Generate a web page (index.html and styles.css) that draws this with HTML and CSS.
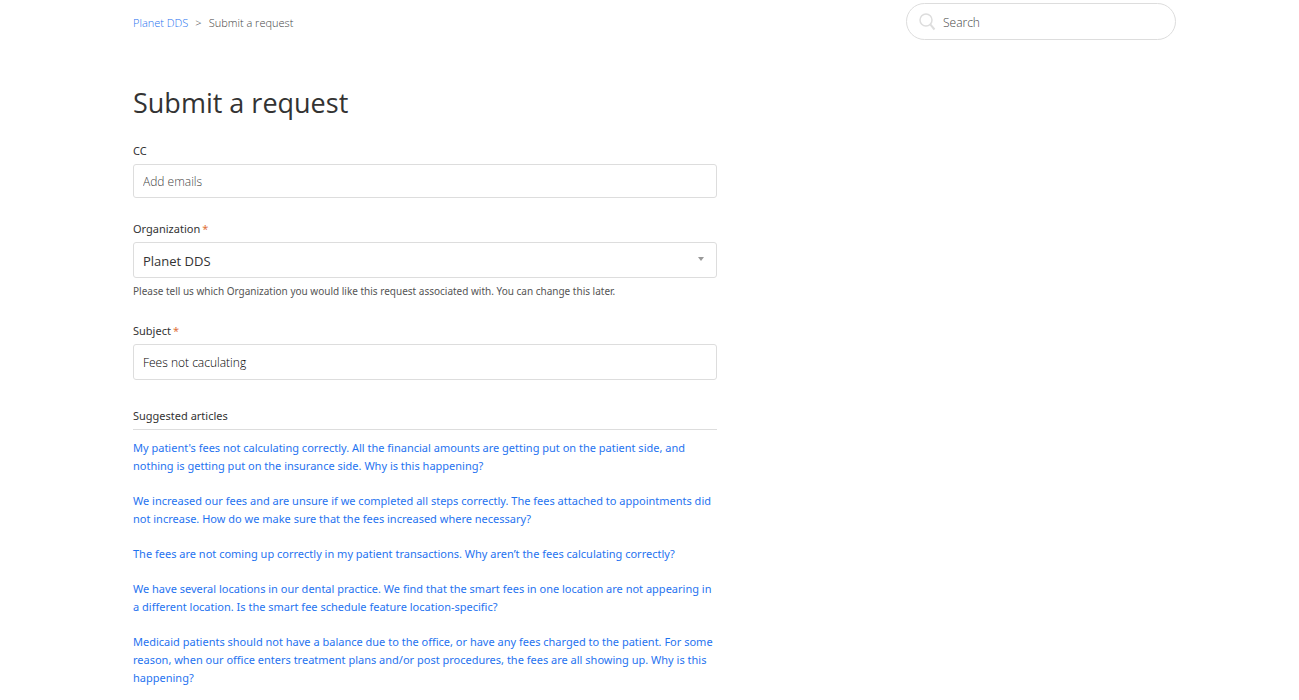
FILE: index.html
```html
<!DOCTYPE html>
<html lang="en">

<head>
    <meta charset="UTF-8">
    <title>Submit a request</title>
    <link rel="stylesheet" href="styles.css">
</head>

<body>
    <div class="container">
        <nav class="sub-nav">
            <ol class="breadcrumbs">
                <li><a href="#">Planet DDS</a></li>
                <li>Submit a request</li>
            </ol>
            <form class="search" role="search">
                <svg class="search-icon" viewBox="0 0 18 18" width="18" height="18" aria-hidden="true">
                    <circle cx="7" cy="7" r="6" fill="none" stroke="#ddd" stroke-width="1.5" />
                    <path d="M11.3 11.3L15.5 16.5" stroke="#ddd" stroke-width="2" />
                </svg>
                <input type="search" placeholder="Search" aria-label="Search">
            </form>
        </nav>

        <main class="form">
            <h1>Submit a request</h1>
            <form class="request-form">
                <div class="form-field cc">
                    <label for="cc">CC</label>
                    <input type="text" id="cc" placeholder="Add emails">
                </div>
                <div class="form-field organization">
                    <label for="organization">Organization<span class="required">*</span></label>
                    <div class="select-box">
                        <select id="organization">
                            <option>Planet DDS</option>
                        </select>
                        <svg class="arrow" viewBox="0 0 6 4" width="6" height="4" aria-hidden="true">
                            <path d="M0 0H6L3 4Z" fill="#999" />
                        </svg>
                    </div>
                    <p class="hint">Please tell us which Organization you would like this request associated with. You can change this later.</p>
                </div>
                <div class="form-field subject">
                    <label for="subject">Subject<span class="required">*</span></label>
                    <input type="text" id="subject" value="Fees not caculating">
                </div>
            </form>

            <section class="suggestions">
                <h2>Suggested articles</h2>
                <ul>
                    <li><a href="#">My patient's fees not calculating correctly. All the financial amounts are getting put on the patient side, and nothing is getting put on the insurance side. Why is this happening?</a></li>
                    <li><a href="#">We increased our fees and are unsure if we completed all steps correctly. The fees attached to appointments did not increase. How do we make sure that the fees increased where necessary?</a></li>
                    <li><a href="#">The fees are not coming up correctly in my patient transactions. Why aren’t the fees calculating correctly?</a></li>
                    <li><a href="#">We have several locations in our dental practice. We find that the smart fees in one location are not appearing in a different location. Is the smart fee schedule feature location-specific?</a></li>
                    <li><a href="#">Medicaid patients should not have a balance due to the office, or have any fees charged to the patient. For some reason, when our office enters treatment plans and/or post procedures, the fees are all showing up. Why is this happening?</a></li>
                </ul>
            </section>
        </main>
    </div>
</body>

</html>
```

FILE: styles.css
```css
* {
    box-sizing: border-box;
}

body {
    margin: 0;
    padding-left: 10px;
    background-color: #fff;
    color: #333;
    font-family: "Noto Sans", "Open Sans", sans-serif;
    font-size: 11px;
    line-height: 18px;
}

a {
    color: #1f73f0;
    text-decoration: none;
}

.container {
    max-width: 1043px;
    margin: 0 auto;
    padding-top: 3px;
}

/* breadcrumbs and search */
.sub-nav {
    display: flex;
    justify-content: space-between;
    align-items: center;
}

.breadcrumbs {
    display: flex;
    margin: 0;
    padding: 2px 0 0;
    list-style: none;
    color: #444;
    font-family: "Open Sans", "Noto Sans", sans-serif;
    font-weight: 300;
}

.breadcrumbs li + li::before {
    content: ">";
    margin: 0 7px;
}

.search {
    display: flex;
    align-items: center;
    gap: 6px;
    width: 270px;
    height: 37px;
    padding: 0 12px;
    border: 1px solid #ddd;
    border-radius: 19px;
}

.search input {
    flex: 1;
    min-width: 0;
    padding: 2px 0 0;
    border: 0;
    outline: 0;
    background: none;
    font: 300 12px/18px "Open Sans", "Noto Sans", sans-serif;
}

/* request form */
.form {
    width: 56%;
    min-width: 320px;
}

h1 {
    margin: 40px 0 16px;
    font-family: "Open Sans", "Noto Sans", sans-serif;
    font-size: 27px;
    font-weight: 400;
    line-height: 46px;
}

.form-field {
    display: flex;
    flex-direction: column;
    margin-bottom: 22px;
}

.form-field label {
    margin-bottom: 4px;
}

.required {
    margin-left: 2px;
    color: #e0713a;
}

.form-field input,
.form-field select {
    width: 100%;
    height: 36px;
    padding: 0 9px;
    border: 1px solid #ddd;
    border-radius: 3px;
    background-color: #fff;
    color: #000;
    font: 300 12px/18px "Open Sans", "Noto Sans", sans-serif;
}

.form-field.cc input {
    height: 34px;
}

/* arrow sits over the select */
.select-box {
    position: relative;
}

.form-field select {
    display: block;
    padding-top: 2px;
    appearance: none;
    color: #333;
    font-size: 13px;
    font-weight: 400;
}

.arrow {
    position: absolute;
    top: 15px;
    right: 13px;
    pointer-events: none;
}

.form-field input::placeholder,
.search input::placeholder {
    color: #444;
    opacity: 1;
}

.hint {
    margin: 4px 0 0;
    color: #555;
    font-size: 10px;
}

/* suggested articles */
.suggestions {
    padding-top: 5px;
}

.suggestions h2 {
    margin: 0;
    padding-bottom: 4px;
    border-bottom: 1px solid #ddd;
    font-size: 11px;
    font-weight: 400;
}

.suggestions ul {
    margin: 0;
    padding: 9px 0 0;
    list-style: none;
}

.suggestions li {
    margin-bottom: 17px;
}

.suggestions li:last-child {
    margin-bottom: 0;
}
```
